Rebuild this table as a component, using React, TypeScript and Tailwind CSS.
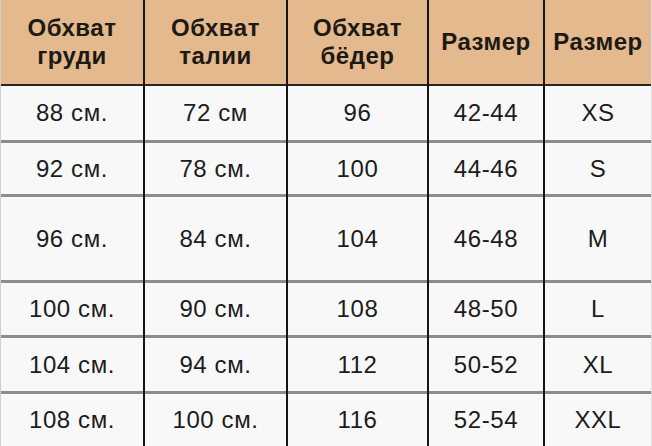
import React from "react";

const colClasses = [
  "w-[144px] border-r-2 border-[#151515]",
  "w-[143px] border-r-2 border-[#151515]",
  "w-[141px] border-r-2 border-[#151515]",
  "w-[116px] border-r-2 border-[#151515]",
  "flex-1 border-r border-[#e0e0e0]",
];

const rowClasses = [
  "h-[57px] border-b-[3px] border-[#8c8c8c]",
  "h-[54px] border-b-[3px] border-[#8c8c8c]",
  "h-[86px] border-b-[3px] border-[#8c8c8c]",
  "h-[55px] border-b-[3px] border-[#8c8c8c]",
  "h-[56px] border-b-[3px] border-[#8c8c8c]",
  "flex-1",
];

const headers: string[][] = [
  ["Обхват", "груди"],
  ["Обхват", "талии"],
  ["Обхват", "бёдер"],
  ["Размер"],
  ["Размер"],
];

const data: string[][] = [
  ["88 см.", "92 см.", "96 см.", "100 см.", "104 см.", "108 см."],
  ["72 см", "78 см.", "84 см.", "90 см.", "94 см.", "100 см."],
  ["96", "100", "104", "108", "112", "116"],
  ["42-44", "44-46", "46-48", "48-50", "50-52", "52-54"],
  ["XS", "S", "M", "L", "XL", "XXL"],
];

export default function App() {
  return (
    <div className="flex w-[652px] h-[446px] overflow-hidden bg-[#f8f8f8] border-l border-[#cfcfcf] font-['Liberation_Sans',Arial,sans-serif]">
      {data.map((col, ci) => (
        <div key={ci} className={`flex flex-col shrink-0 ${colClasses[ci]}`}>
          <div className="h-[86px] shrink-0 bg-[#e3b98d] border-b-2 border-[#2a2520] flex flex-col items-center justify-center text-[24px] leading-[28px] font-bold text-[#1d1915] tracking-[0.5px]">
            {headers[ci].map((h, i) => (
              <span key={i}>{h}</span>
            ))}
          </div>
          {col.map((v, ri) => (
            <div
              key={ri}
              className={`shrink-0 flex items-center justify-center bg-[#f8f8f8] text-[24px] text-[#1c1c1c] tracking-[0.6px] ${rowClasses[ri]}`}
            >
              {v}
            </div>
          ))}
        </div>
      ))}
    </div>
  );
}
